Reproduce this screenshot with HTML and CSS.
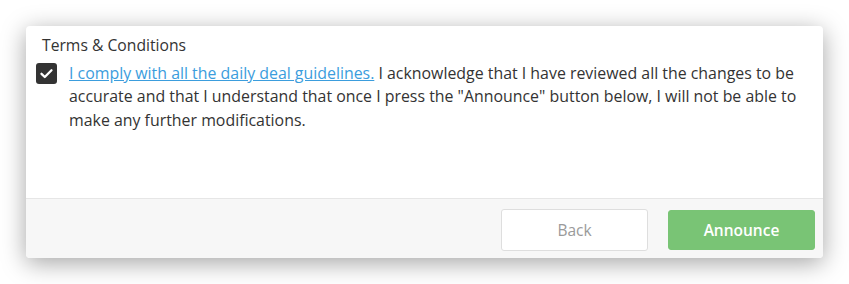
FILE: index.html
```html
<!DOCTYPE html>
<html lang="en">
<head>
<meta charset="utf-8">
<title>Terms &amp; Conditions</title>
<link rel="stylesheet" href="styles.css">
</head>
<body>
<div class="card">
  <div class="card-body">
    <div class="title">Terms &amp; Conditions</div>
    <div class="agree">
      <span class="checkbox">
        <svg viewBox="0 0 21 21" width="21" height="21" aria-hidden="true">
          <path d="M5.5 10.8 L8.8 14 L15.5 7.2" fill="none" stroke="#fff" stroke-width="2.3" stroke-linecap="round" stroke-linejoin="round"/>
        </svg>
      </span>
      <p class="agree-text"><a href="#" class="link">I comply with all the daily deal guidelines.</a> I acknowledge that I have reviewed all the changes to be accurate and that I understand that once I press the "Announce" button below, I will not be able to make any further modifications.</p>
    </div>
  </div>
  <div class="card-footer">
    <button class="btn btn-back">Back</button>
    <button class="btn btn-announce">Announce</button>
  </div>
</div>
</body>
</html>
```

FILE: styles.css
```css
* { box-sizing: border-box; }
html, body { margin: 0; background: #fff; }
body {
  padding: 26px;
  height: 284px;
  font-family: "Open Sans", "Liberation Sans", sans-serif;
  color: #333;
}
.card {
  height: 232px;
  background: #fff;
  border-radius: 4px;
  box-shadow: 0 5px 24px rgba(0, 0, 0, 0.36);
  display: flex;
  flex-direction: column;
  overflow: hidden;
}
.card-body {
  flex: 1;
  padding: 9px 13px 0 10px;
}
.title {
  font-size: 15.7px;
  line-height: 21px;
  padding-left: 6px;
  color: #333;
}
.agree {
  display: flex;
  align-items: flex-start;
  gap: 12px;
  margin-top: 6px;
}
.checkbox {
  flex: none;
  width: 21px;
  height: 21px;
  border-radius: 3px;
  background: #333;
  display: flex;
  margin-top: 1px;
}
.agree-text {
  margin: 0;
  font-size: 15.9px;
  line-height: 23.3px;
  color: #333;
}
.link {
  color: #3b9ddd;
  text-decoration: underline;
}
.card-footer {
  height: 60px;
  background: #f7f7f7;
  border-top: 1px solid #e6e6e6;
  display: flex;
  justify-content: flex-end;
  align-items: center;
  gap: 20px;
  padding: 2px 8px 0 0;
}
.btn {
  width: 147px;
  height: 40px;
  border-radius: 3px;
  font-family: inherit;
  font-size: 15.5px;
  cursor: pointer;
}
.btn-back {
  background: #fff;
  border: 1px solid #dedede;
  color: #9a9a9a;
  height: 42px;
}
.btn-announce {
  background: #79c475;
  border: 1px solid #79c475;
  color: #fff;
  font-weight: 600;
}
```
